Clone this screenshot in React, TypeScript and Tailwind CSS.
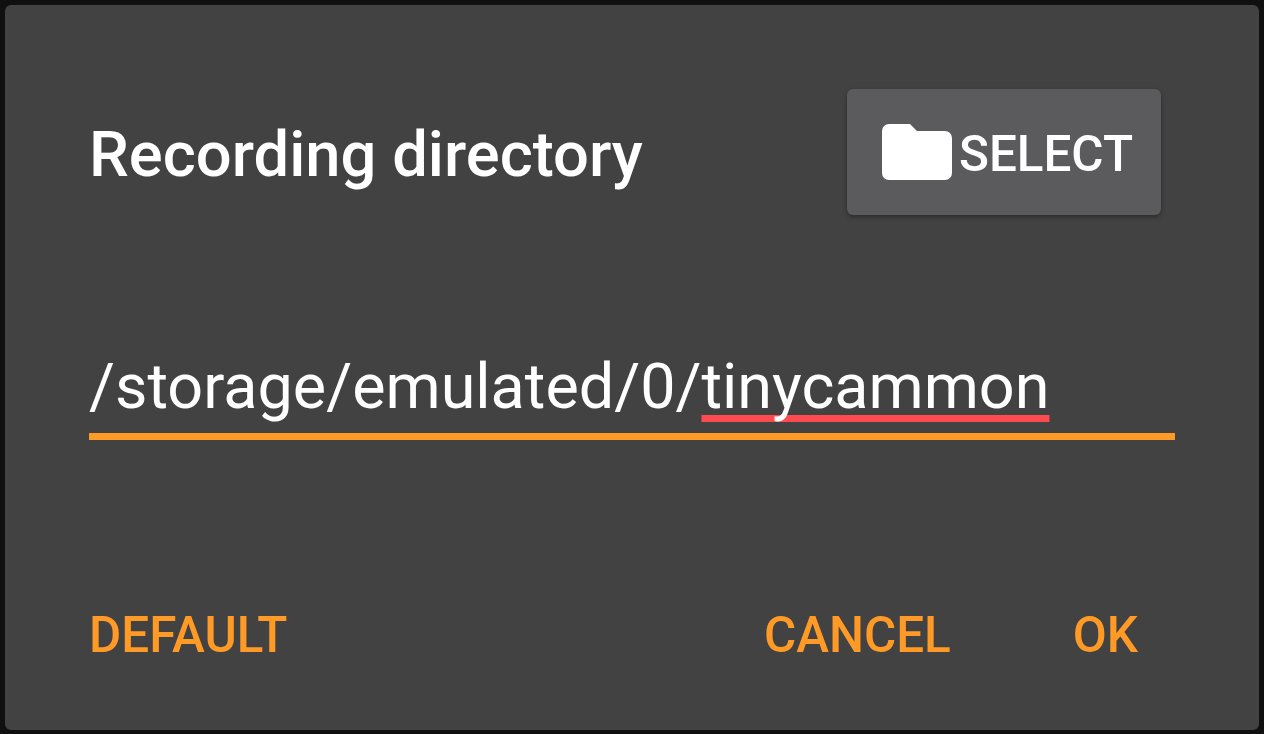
export default function App() {
  return (
    <div className="h-[734px] w-[1264px] overflow-hidden bg-[#101010] p-[5px] font-['Roboto',sans-serif]">
      <div className="flex h-[725px] w-[1254px] flex-col rounded-[6px] bg-[#424242] pl-[84px] pr-[84px]">
        {/* Title row */}
        <div className="mt-[84px] flex h-[126px] items-center justify-between pr-[14px]">
          <h1 className="pt-[6px] text-[63.3px] font-medium leading-none text-white">Recording directory</h1>
          <button className="flex h-[126px] w-[314px] items-center justify-center gap-[7px] rounded-[6px] bg-[#5b5b5d] pl-[7px] text-[49.4px] font-medium text-white shadow-[0_2px_4px_rgba(0,0,0,0.35)]">
            <svg width="70" height="56" viewBox="0 0 70 56" fill="white" className="mb-[1px]">
              <path d="M7 0h21l7 7h28a7 7 0 0 1 7 7v35a7 7 0 0 1-7 7H7a7 7 0 0 1-7-7V7a7 7 0 0 1 7-7z" />
            </svg>
            <span className="pt-[4px]">SELECT</span>
          </button>
        </div>
        {/* Input */}
        <div className="mt-[134px] h-[91px] border-b-[7px] border-[#ff9a26] text-[62.9px] leading-[76px] text-white">
          /storage/emulated/0/<span className="underline decoration-[#ff4a4f] decoration-[7px] underline-offset-[7px] [text-decoration-skip-ink:none]">tinycammon</span>
        </div>
        {/* Actions */}
        <div className="mt-[171px] flex items-center justify-between pr-[37px] text-[49.4px] font-medium leading-none text-[#ff9a26]">
          <span>DEFAULT</span>
          <div className="flex gap-[122px]">
            <span>CANCEL</span>
            <span>OK</span>
          </div>
        </div>
      </div>
    </div>
  );
}
